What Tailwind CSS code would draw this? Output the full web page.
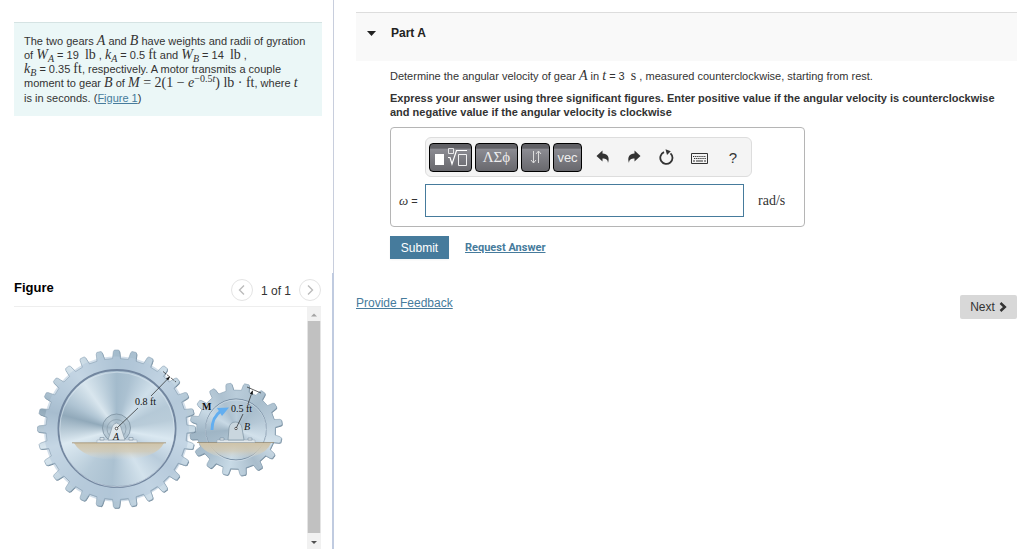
<!DOCTYPE html>
<html lang="en">
<head>
  <meta charset="UTF-8">
  <meta name="viewport" content="width=device-width, initial-scale=1.0">
  <title>Part A - Gears</title>
  <script src="https://cdn.jsdelivr.net/npm/@tailwindcss/browser@4"></script>
</head>
<body class="bg-white text-[#333] font-['Liberation_Sans',Arial,sans-serif] text-[11px]">
  <div class="flex h-screen overflow-hidden">

    <!-- left column: problem statement and figure -->
    <aside class="flex w-[334px] shrink-0 flex-col">
      <div class="h-[273px] shrink-0 border-r border-[#c8cedd] pt-[22px] pl-[14px] pr-[11px]">
        <div class="h-[94px] border-t border-[#d5e3e3] bg-[#ebf7f7] pt-[11px] pl-[10px] leading-[14px] whitespace-nowrap">
          <p>The two gears <i class="font-['Liberation_Serif',serif] text-[14px] leading-none">A</i> and <i class="font-['Liberation_Serif',serif] text-[14px] leading-none">B</i> have weights and radii of gyration</p>
          <p>of <i class="font-['Liberation_Serif',serif] text-[14px] leading-none">W<sub class="text-[10px] leading-none">A</sub></i> = 19 &nbsp;<span class="font-['Liberation_Serif',serif] text-[14px] leading-none">lb</span> , <i class="font-['Liberation_Serif',serif] text-[14px] leading-none">k<sub class="text-[10px] leading-none">A</sub></i> = 0.5 <span class="font-['Liberation_Serif',serif] text-[14px] leading-none">ft</span> and <i class="font-['Liberation_Serif',serif] text-[14px] leading-none">W<sub class="text-[10px] leading-none">B</sub></i> = 14 &nbsp;<span class="font-['Liberation_Serif',serif] text-[14px] leading-none">lb</span> ,</p>
          <p><i class="font-['Liberation_Serif',serif] text-[14px] leading-none">k<sub class="text-[10px] leading-none">B</sub></i> = 0.35 <span class="font-['Liberation_Serif',serif] text-[14px] leading-none">ft</span>, respectively. A motor transmits a couple</p>
          <p class="leading-[15px]">moment to gear <i class="font-['Liberation_Serif',serif] text-[14px] leading-none">B</i> of <span class="font-['Liberation_Serif',serif] text-[14px] leading-none"><i>M</i> = 2(1 − <i>e</i><sup class="text-[10px] leading-none">−0.5<i>t</i></sup>) lb · ft</span>, where <i class="font-['Liberation_Serif',serif] text-[14px] leading-none">t</i></p>
          <p class="leading-[15px]">is in seconds. (<a href="#figure" class="text-[#467b9c] underline">Figure 1</a>)</p>
        </div>
      </div>

      <section id="figure" class="flex min-h-0 flex-1 flex-col border-r-2 border-[#c0cbe0] pl-[14px] pr-[11px]">
        <div class="flex h-[34px] shrink-0 items-center justify-between border-b border-[#eee]">
          <h2 class="pb-1 text-[13px] font-bold text-black">Figure</h2>
          <div class="flex items-center gap-2">
            <button aria-label="Previous figure" class="flex size-[22px] items-center justify-center rounded-full border border-[#e4e4e4]">
              <svg class="size-3" viewBox="0 0 12 12" fill="none" stroke="#bbb" stroke-width="1.4"><path d="M8 1.5 3.5 6 8 10.500"/></svg>
            </button>
            <span class="pt-[3px] text-[12px]">1 of 1</span>
            <button aria-label="Next figure" class="flex size-[22px] items-center justify-center rounded-full border border-[#e4e4e4]">
              <svg class="size-3" viewBox="0 0 12 12" fill="none" stroke="#bbb" stroke-width="1.4"><path d="M4 1.5 8.500 6 4 10.500"/></svg>
            </button>
          </div>
        </div>
        <div class="flex min-h-0 flex-1">
          <div class="min-w-0 flex-1 overflow-hidden pt-[33px] pl-4">
            <svg class="h-[180px] w-[260px]" viewBox="30 340 260 180" role="img" aria-label="Gears A and B in mesh">
              <defs>
                <clipPath id="clipA"><path id="gearA"/></clipPath>
                <clipPath id="clipB"><path id="gearB"/></clipPath>
                <linearGradient id="soil" x1="0" y1="0" x2="0" y2="1">
                  <stop offset="0" stop-color="#cfc3a8"/><stop offset=".5" stop-color="#d3cbb6" stop-opacity=".8"/><stop offset="1" stop-color="#d8dcdb" stop-opacity="0"/>
                </linearGradient>
                <marker id="tip" viewBox="0 0 6 6" refX="5" refY="3" markerWidth="6" markerHeight="6" orient="auto"><path d="M0 .8 6 3 0 5.200z" fill="#111"/></marker>
              </defs>

              <!-- gear B -->
              <use href="#gearB" fill="#71889a" x=".6" y=".8"/>
              <foreignObject x="189" y="382" width="95" height="95" clip-path="url(#clipB)">
                <div class="size-full bg-[conic-gradient(#b9ccda,#a9becd_40deg,#b5c8d6_70deg,#d2e1eb_110deg,#a9bdcc_150deg,#c8dae6_190deg,#acc1d0_225deg,#9fb5c5_265deg,#c8d9e5_300deg,#adc1d0_335deg,#b9ccda)]"></div>
              </foreignObject>
              <use href="#gearB" fill="none" stroke="#8aa1b3" stroke-width=".6"/>
              <circle cx="236" cy="429.500" r="30.500" fill="none" stroke="#71889e" stroke-width="1"/>
              <circle cx="236" cy="430.300" r="30.500" fill="none" stroke="#e2edf4" stroke-width=".5"/>
              <path d="M199 443h72q-5 14-34 16-30-1-38-16z" fill="url(#soil)"/>
              <path d="M197 442.500h77" stroke="#988b72" stroke-width=".8"/>
              <path d="M217 440h38v2.500h-38z" fill="#e1e9ed" stroke="#8b9ba7" stroke-width=".4"/>
              <path d="M228 440 229 428Q230 422 235.500 422T242 428l2 12z" fill="#c9d6de" stroke="#8499a8" stroke-width=".8"/>
              <path d="M220 438h4v2h-4zM248 438h4v2h-4z" fill="#dce5ea" stroke="#687f90" stroke-width=".5"/>

              <!-- gear A -->
              <use href="#gearA" fill="#71889a" x=".6" y=".8"/>
              <foreignObject x="36" y="349" width="161" height="161" clip-path="url(#clipA)">
                <div class="size-full bg-[conic-gradient(#a3bbcc,#abc1d1_15deg,#cfdfea_40deg,#b5c9d7_65deg,#b9ccd9_80deg,#dae8f1_100deg,#b9ccdb_125deg,#d3e2ec_150deg,#abc1d1_185deg,#b7cbd9_215deg,#dce9f1_255deg,#91a9ba_285deg,#afc4d3_300deg,#d9e6ee_325deg,#a3bbcc)]"></div>
              </foreignObject>
              <circle cx="116.500" cy="429" r="65.500" fill="none" stroke="#b5c9dc" stroke-opacity=".6" stroke-width="14"/>
              <use href="#gearA" fill="none" stroke="#8aa1b3" stroke-width=".6"/>
              <circle cx="117" cy="428.500" r="58.500" fill="none" stroke="#72869f" stroke-width="2"/>
              <circle cx="117" cy="429.500" r="57.300" fill="none" stroke="#dce8f1" stroke-width=".6"/>
              <circle cx="116.500" cy="428" r="14" fill="#a6bac8" fill-opacity=".6" stroke="#7c90a0" stroke-width=".8"/>
              <circle cx="116.500" cy="429" r="9.500" fill="none" stroke="#8d9fad" stroke-width=".8"/>
              <path d="M74 443h90q-8 16-45 17-35 0-45-17z" fill="url(#soil)"/>
              <path d="M72 442.800h94" stroke="#a08d69" stroke-width=".8"/>
              <path d="M97 440h40v2.500H97z" fill="#e4ecf0" stroke="#8b9ba7" stroke-width=".4"/>
              <path d="M108 440 112.500 426Q116.500 420 120.500 426L125 440z" fill="#dde6eb" stroke="#879aa7" stroke-width=".7"/>
              <path d="M100 437.500h4v2.500h-4zM129 437.500h4v2.500h-4z" fill="#dce5ea" stroke="#687f90" stroke-width=".5"/>

              <!-- radius leaders -->
              <g fill="none" stroke="#222" stroke-width=".7">
                <circle cx="116.500" cy="428.500" r="1.300" fill="#fff"/>
                <path d="M117.500 427.500 138 408"/>
                <path d="M151 396 169.500 377" marker-end="url(#tip)"/>
                <path d="M163 371.500 176 382" stroke-dasharray="4 1"/>
                <circle cx="236" cy="428.500" r="1.200" fill="#fff"/>
                <path d="M236.500 427.500 243 414"/>
                <path d="M248 404 252.500 391" marker-end="url(#tip)"/>
                <path d="M247 387 261 393"/>
              </g>
              <path d="M212 430C212 421 215 415 221 411" fill="none" stroke="#62aef0" stroke-width="2.800"/>
              <path d="M217 408 229 407.500 222 416z" fill="#62aef0"/>

              <g fill="#111" class="font-['Liberation_Serif',serif] text-[10px]">
                <text x="135" y="405">0.8 ft</text>
                <text x="231" y="412">0.5 ft</text>
                <text x="202" y="410" class="font-bold">M</text>
                <text x="113" y="440" class="italic">A</text>
                <text x="244" y="430" class="italic">B</text>
              </g>
            </svg>
          </div>
          <div class="flex w-[14px] flex-col bg-[#f1f1f1]" aria-hidden="true">
            <svg class="h-[14px] w-full shrink-0" viewBox="0 0 14 14"><path d="M4 9.500 7 6.500l3 3z" fill="#a3a3a3"/></svg>
            <div class="flex-1 border-x border-[#e4e4e4] bg-[#c1c1c1]"></div>
            <svg class="h-4 w-full shrink-0" viewBox="0 0 14 16"><path d="M4 8h6l-3 3z" fill="#505050"/></svg>
          </div>
        </div>
      </section>
    </aside>

    <!-- right column: question -->
    <main class="min-w-0 flex-1 pt-3 pl-[22px] pr-[7px]">
      <div class="flex h-[49px] items-center gap-[15px] border-t border-[#ddd] bg-[#f9f9f9] pb-2 pl-[11px]">
        <svg class="h-[5px] w-[9px]" viewBox="0 0 9 5"><path d="M0 0h9L4.500 5z" fill="#222"/></svg>
        <h1 class="text-[12px] font-bold text-[#222]">Part A</h1>
      </div>

      <div class="pt-[7px] pl-[34px]">
        <p class="leading-4">Determine the angular velocity of gear <i class="font-['Liberation_Serif',serif] text-[14px] leading-none">A</i> in <i class="font-['Liberation_Serif',serif] text-[14px] leading-none">t</i> = 3 &nbsp;<span class="font-['Liberation_Serif',serif] text-[14px] leading-none">s</span> , measured counterclockwise, starting from rest.</p>
        <p class="mt-[7px] font-bold leading-[14px]">Express your answer using three significant figures. Enter positive value if the angular velocity is counterclockwise and negative value if the angular velocity is clockwise</p>

        <form>
          <div class="mt-2 h-[100px] w-[415px] rounded-[4px] border border-[#b5b5b5] pt-[9px]">
            <div class="ml-[34px] flex h-[40px] w-[327px] items-center gap-[3px] rounded-md border border-[#ddd] bg-[#f4f4f4] pl-[3px]">
              <button type="button" aria-label="Templates" class="flex h-[29px] w-[43px] items-center justify-center rounded-[4px] border border-black bg-linear-to-b from-[#606065] from-15% via-[#8b8b92] via-20% to-[#68686d]">
                <svg class="h-5 w-[34px]" viewBox="0 0 34 20" fill="none" stroke="#fff"><path d="M1 7h9v11H1z" fill="#fff" stroke="none"/><path d="M14.500 1.500h5v5h-5z" stroke-width=".8"/><path d="M14 10.500h2L18 17 22.500 3.500H33" stroke-width="1.200"/><path d="M24.500 7.500h8v11h-8z" stroke-width=".9"/></svg>
              </button>
              <button type="button" class="h-[29px] w-[43px] rounded-[4px] border border-black bg-linear-to-b from-[#606065] from-15% via-[#8b8b92] via-20% to-[#68686d] font-['Liberation_Serif',serif] text-[15px] leading-none text-[#eee]">ΛΣϕ</button>
              <button type="button" aria-label="Arrows" class="flex h-[29px] w-[29px] items-center justify-center rounded-[4px] border border-black bg-linear-to-b from-[#606065] from-15% via-[#8b8b92] via-20% to-[#68686d]">
                <svg class="h-[14px] w-3" viewBox="0 0 12 14" fill="none" stroke="#ddd"><path d="M3.500 1v12M1 10l2.500 3L6 10M8.500 13V1M6 4l2.500-3L11 4"/></svg>
              </button>
              <button type="button" class="h-[29px] w-[29px] rounded-[4px] border border-black bg-linear-to-b from-[#606065] from-15% via-[#8b8b92] via-20% to-[#68686d] text-[13px] leading-none text-[#eee]">vec</button>
              <div class="ml-[11px] flex flex-1 items-center justify-between pr-[10px] text-[#333]">
                <button type="button" aria-label="Undo"><svg class="h-[14px] w-[14px]" viewBox="0 0 14 14" fill="currentColor"><path d="M.5 6 6.500.500v3C11.500 3.700 14 7 12 13 11.800 9.600 10 8.500 6.500 8.500v3z"/></svg></button>
                <button type="button" aria-label="Redo"><svg class="h-[14px] w-[14px]" viewBox="0 0 14 14" fill="currentColor"><path d="M13.500 6 7.500.500v3C2.500 3.700 0 7 2 13 2.200 9.600 4 8.500 7.500 8.500v3z"/></svg></button>
                <button type="button" aria-label="Reset"><svg class="h-4 w-4" viewBox="0 0 16 16" fill="none" stroke="currentColor" stroke-width="1.800"><path d="M12.500 4.300A6.100 6.100 0 1 1 6 3.200"/><path d="M7.500.200 12.800 2.200 9 6z" fill="currentColor" stroke="none"/></svg></button>
                <button type="button" aria-label="Keyboard shortcuts"><svg class="mt-[3px] h-[11px] w-[17px]" viewBox="0 0 17 11" fill="none" stroke="currentColor"><path d="M.5.500h16v10H.500z"/><path d="M2 3.500h13M3 5.500h12" stroke-dasharray="1.300 .8"/><path d="M2 8h2M5 8h7M13 8h2"/></svg></button>
                <button type="button" aria-label="Help" class="w-4 text-[15px] leading-none">?</button>
              </div>
            </div>
            <div class="mt-[7px] flex items-center">
              <label for="answer" class="w-[34px] pl-2 whitespace-nowrap"><i class="font-['Liberation_Serif',serif] text-[13px]">ω</i> =</label>
              <input id="answer" type="text" class="h-[33px] w-[319px] border border-[#467b9c] bg-white px-2 outline-none">
              <span class="ml-[14px] font-['Liberation_Serif',serif] text-[14px]">rad/s</span>
            </div>
          </div>
          <div class="mt-[9px] flex items-center gap-4">
            <button type="submit" class="h-[23px] w-[59px] bg-[#467b9c] text-[12px] text-white shadow-xs">Submit</button>
            <a href="#" class="font-['Roboto',sans-serif] text-[11px] font-bold leading-4 text-[#467b9c] underline">Request Answer</a>
          </div>
        </form>
      </div>

      <div class="mt-9 flex items-start justify-between">
        <a href="#" class="text-[12px] leading-4 text-[#467b9c] underline">Provide Feedback</a>
        <button class="flex h-6 w-[57px] items-center justify-center gap-1 rounded-xs bg-[#d8d8d8] text-[12px]">Next
          <svg class="h-[10px] w-2" viewBox="0 0 8 10" fill="none" stroke="#333" stroke-width="2.500"><path d="M1.500 1 5.800 5 1.500 9"/></svg>
        </button>
      </div>
    </main>
  </div>

  <script>
    // outline of a gear: one trapezoid per tooth, starting at the given angle in degrees
    function gearPath(cx, cy, root, tip, teeth, start) {
      const step = 2 * Math.PI / teeth
      const point = (r, a) => (cx + r * Math.sin(a)).toFixed(2) + " " + (cy - r * Math.cos(a)).toFixed(2)
      const points = []
      for (let i = 0; i < teeth; i++) {
        const a = start * Math.PI / 180 + i * step
        points.push(point(root, a - step * 0.25), point(tip - 1.5, a - step * 0.18), point(tip, a - step * 0.12))
        points.push(point(tip, a + step * 0.12), point(tip - 1.5, a + step * 0.18), point(root, a + step * 0.25))
      }
      return "M" + points.join("L") + "Z"
    }
    document.getElementById("gearA").setAttribute("d", gearPath(116.5, 429, 70.5, 79, 28, 0))
    document.getElementById("gearB").setAttribute("d", gearPath(236, 429.5, 39.5, 46.5, 16, 13.5))
  </script>
</body>
</html>
